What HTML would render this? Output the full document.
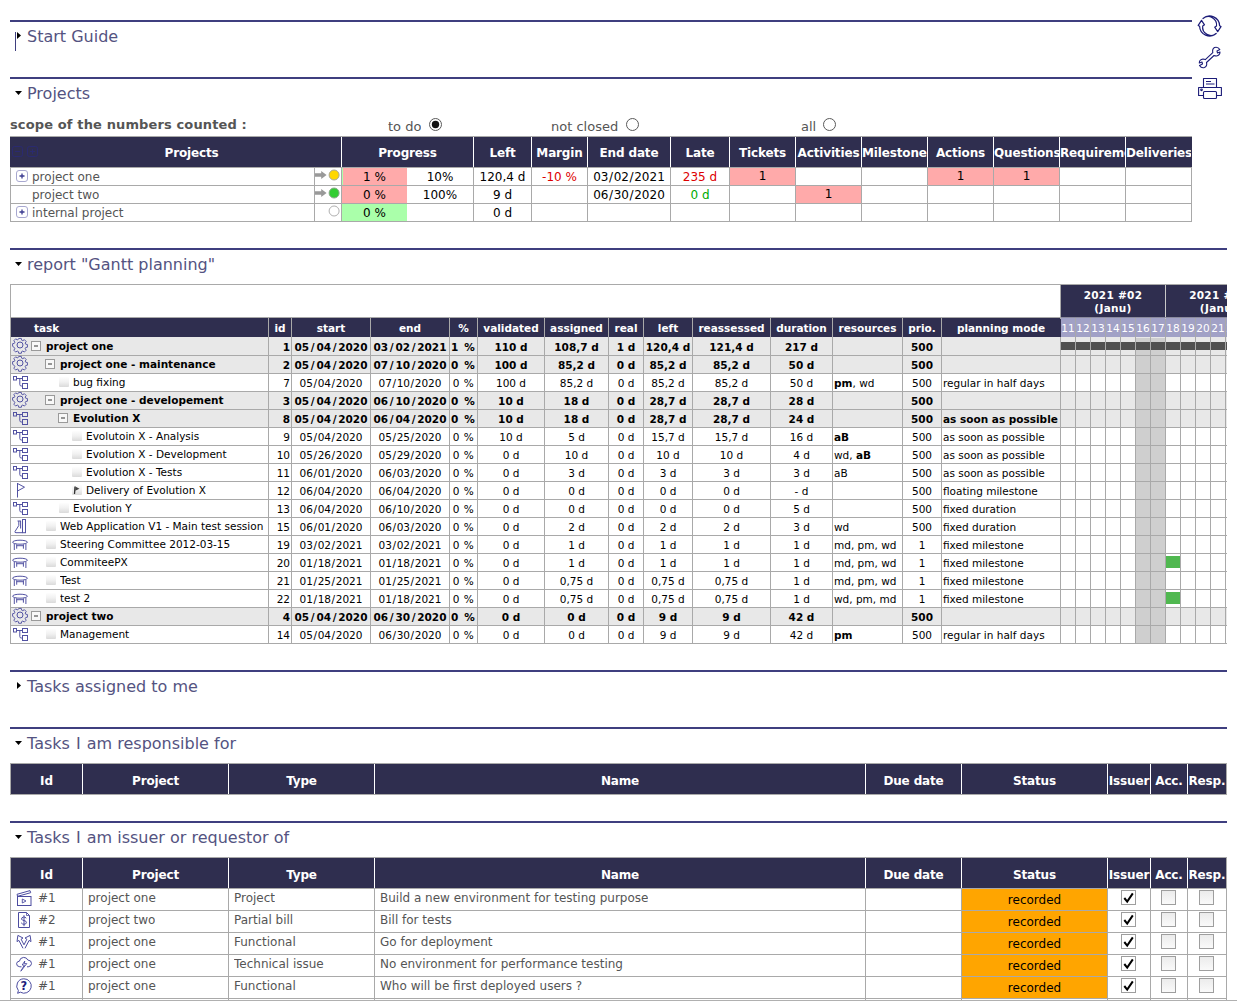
<!DOCTYPE html>
<html><head><meta charset="utf-8"><title>Today</title>
<style>
html,body{margin:0;padding:0;background:#fff}
body{width:1237px;height:1001px;overflow:hidden;position:relative;font-family:"DejaVu Sans",Verdana,"Liberation Sans",sans-serif;font-size:13px;color:#000}
.a{position:absolute;white-space:nowrap;overflow:hidden}
.v{position:absolute;overflow:visible}
.hr{position:absolute;height:2px;background:#3f3f7f}
.ttl{position:absolute;font-size:16px;line-height:20px;color:#545381;white-space:nowrap}
.hd{position:absolute;background:#2f2e4f;color:#fff;text-align:center;white-space:nowrap;overflow:hidden;font-size:13px}
.hl{position:absolute;height:1px;background:#a9a9a9}
.vl{position:absolute;width:1px;background:#a9a9a9}
.c{position:absolute;white-space:nowrap;overflow:hidden;text-align:center;font-size:12px}
.r{font-size:12px}
.ph{font-size:12px;font-weight:bold;letter-spacing:-.15px}
.g{font-size:10.5px}
.b{font-weight:bold}
.gr{color:#555}
.s{margin:0 .6px}
.b .s{margin:0 1.7px}
.pc{letter-spacing:.5px}
.b.pc{letter-spacing:1.2px}
svg{position:absolute;overflow:visible}
</style></head>
<body>
<div class="hr" style="left:10px;top:20px;width:1182px"></div>
<svg style="left:17px;top:32px" width="5" height="8" viewBox="0 0 5 8"><path d="M0 0V7L4 3.5Z" fill="#000"/></svg>
<div class="ttl" style="left:27px;top:27px">Start Guide</div>
<div class="vl" style="left:15px;top:32px;height:19px;background:#3f3f7f"></div>
<div class="hr" style="left:10px;top:77px;width:1182px"></div>
<svg style="left:15px;top:91px" width="8" height="5" viewBox="0 0 8 5"><path d="M0 0H7L3.5 4Z" fill="#000"/></svg>
<div class="ttl" style="left:27px;top:84px">Projects</div>
<div class="hr" style="left:10px;top:248px;width:1217px"></div>
<svg style="left:15px;top:262px" width="8" height="5" viewBox="0 0 8 5"><path d="M0 0H7L3.5 4Z" fill="#000"/></svg>
<div class="ttl" style="left:27px;top:255px">report &quot;Gantt planning&quot;</div>
<div class="hr" style="left:10px;top:670px;width:1217px"></div>
<svg style="left:17px;top:682px" width="5" height="8" viewBox="0 0 5 8"><path d="M0 0V7L4 3.5Z" fill="#000"/></svg>
<div class="ttl" style="left:27px;top:677px">Tasks assigned to me</div>
<div class="hr" style="left:10px;top:727px;width:1217px"></div>
<svg style="left:15px;top:741px" width="8" height="5" viewBox="0 0 8 5"><path d="M0 0H7L3.5 4Z" fill="#000"/></svg>
<div class="ttl" style="left:27px;top:734px">Tasks <span style="margin:0 1px">I</span> am responsible for</div>
<div class="hr" style="left:10px;top:821px;width:1217px"></div>
<svg style="left:15px;top:835px" width="8" height="5" viewBox="0 0 8 5"><path d="M0 0H7L3.5 4Z" fill="#000"/></svg>
<div class="ttl" style="left:27px;top:828px">Tasks <span style="margin:0 1px">I</span> am issuer or requestor of</div>
<svg style="left:1198px;top:15px" width="24" height="22" viewBox="0 0 24 22"><g fill="none" stroke="#1c1c78" stroke-width="1.2" stroke-linejoin="round" transform="translate(11.6,11)"><path id="rf" d="M-6.6 -7.5A10 10 0 0 1 10 -.3L11.4 .6L8.1 5.7L5.1 1.2L6.9 0A8.3 8.3 0 0 0 -6.6 -7.5Z"/><use href="#rf" transform="rotate(180)"/></g></svg>
<svg style="left:1198px;top:46px" width="23" height="23" viewBox="0 0 23 23"><g fill="none" stroke="#1c1c78" stroke-width="1.1" stroke-linejoin="round"><path d="M16.5 1.5Q20 .5 21.8 3.5L19 5L19.5 7L22 6Q22 9.5 18.5 10Q17 10 16 9.5L8.5 16.5Q9.5 20 6.5 21.5Q3.5 22.5 1.5 19.5L4.5 18L4 16L1.3 17Q1.3 13.5 5 13Q6.5 13 7.3 13.6L14.8 6.6Q14 3 16.5 1.5Z"/></g></svg>
<svg style="left:1198px;top:77px" width="24" height="23" viewBox="0 0 24 23"><g fill="none" stroke="#1c1c78" stroke-width="1.1" stroke-linejoin="round"><path d="M5.5 10V1.5H18.5V10"/><path d="M5.5 18.5H.6V10.5H23.4V18.5H18.5"/><rect x="5.5" y="14.5" width="13" height="7" rx="1"/><path d="M8 4.5H13M8 7H16.5" stroke-width="1"/><circle cx="3.5" cy="12.8" r=".8"/></g></svg>
<div class="a b gr" style="left:10px;top:116px;line-height:18px;font-size:13px;letter-spacing:.13px">scope of the numbers counted :</div>
<div class="a gr" style="left:388px;top:118px;line-height:18px">to do</div>
<svg style="left:429px;top:118px" width="13" height="13" viewBox="0 0 13 13"><circle cx="6.5" cy="6.5" r="6" fill="#fff" stroke="#5a5a5a" stroke-width="1"/><circle cx="6.5" cy="6.5" r="3.7" fill="#111"/></svg>
<div class="a gr" style="left:551px;top:118px;line-height:18px">not closed</div>
<svg style="left:626px;top:118px" width="13" height="13" viewBox="0 0 13 13"><circle cx="6.5" cy="6.5" r="6" fill="#fff" stroke="#5a5a5a" stroke-width="1"/></svg>
<div class="a gr" style="left:801px;top:118px;line-height:18px">all</div>
<svg style="left:823px;top:118px" width="13" height="13" viewBox="0 0 13 13"><circle cx="6.5" cy="6.5" r="6" fill="#fff" stroke="#5a5a5a" stroke-width="1"/></svg>
<div class="a" style="left:10px;top:137px;width:1182px;height:30px;background:#2f2e4f"></div>
<div class="hd ph" style="left:42px;top:137px;width:299px;height:30px;line-height:33px">Projects</div>
<div class="hd ph" style="left:342px;top:137px;width:131px;height:30px;line-height:33px">Progress</div>
<div class="hd ph" style="left:474px;top:137px;width:57px;height:30px;line-height:33px">Left</div>
<div class="hd ph" style="left:532px;top:137px;width:55px;height:30px;line-height:33px">Margin</div>
<div class="hd ph" style="left:588px;top:137px;width:82px;height:30px;line-height:33px">End date</div>
<div class="hd ph" style="left:671px;top:137px;width:58px;height:30px;line-height:33px">Late</div>
<div class="hd ph" style="left:730px;top:137px;width:65px;height:30px;line-height:33px">Tickets</div>
<div class="hd ph" style="left:796px;top:137px;width:65px;height:30px;line-height:33px">Activities</div>
<div class="hd ph" style="left:862px;top:137px;width:65px;height:30px;line-height:33px">Milestones</div>
<div class="hd ph" style="left:928px;top:137px;width:65px;height:30px;line-height:33px">Actions</div>
<div class="hd ph" style="left:994px;top:137px;width:65px;height:30px;line-height:33px">Questions</div>
<div class="hd ph" style="left:1060px;top:137px;width:65px;height:30px;line-height:33px">Requirements</div>
<div class="hd ph" style="left:1126px;top:137px;width:65px;height:30px;line-height:33px">Deliveries</div>
<div class="vl" style="left:341px;top:137px;height:30px;background:#fff"></div>
<div class="vl" style="left:473px;top:137px;height:30px;background:#fff"></div>
<div class="vl" style="left:531px;top:137px;height:30px;background:#fff"></div>
<div class="vl" style="left:587px;top:137px;height:30px;background:#fff"></div>
<div class="vl" style="left:670px;top:137px;height:30px;background:#fff"></div>
<div class="vl" style="left:729px;top:137px;height:30px;background:#fff"></div>
<div class="vl" style="left:795px;top:137px;height:30px;background:#fff"></div>
<div class="vl" style="left:861px;top:137px;height:30px;background:#fff"></div>
<div class="vl" style="left:927px;top:137px;height:30px;background:#fff"></div>
<div class="vl" style="left:993px;top:137px;height:30px;background:#fff"></div>
<div class="vl" style="left:1059px;top:137px;height:30px;background:#fff"></div>
<div class="vl" style="left:1125px;top:137px;height:30px;background:#fff"></div>
<div class="hl" style="left:10px;top:136px;width:1182px"></div>
<svg style="left:12px;top:146px" width="27" height="12" viewBox="0 0 27 12"><rect x=".5" y=".5" width="10" height="10" rx="2" fill="none" stroke="#2a2a70"/><path d="M3 5.5H8" stroke="#2a2a70"/><rect x="15.5" y=".5" width="10" height="10" rx="2" fill="none" stroke="#2a2a70"/><path d="M18 5.5H23M20.5 3V8" stroke="#2a2a70"/></svg>
<div class="hl" style="left:10px;top:167px;width:1182px"></div>
<div class="hl" style="left:10px;top:185px;width:1182px"></div>
<div class="hl" style="left:10px;top:203px;width:1182px"></div>
<div class="hl" style="left:10px;top:221px;width:1182px"></div>
<div class="vl" style="left:10px;top:167px;height:55px"></div>
<div class="vl" style="left:314px;top:167px;height:55px"></div>
<div class="vl" style="left:341px;top:167px;height:55px"></div>
<div class="vl" style="left:473px;top:167px;height:55px"></div>
<div class="vl" style="left:531px;top:167px;height:55px"></div>
<div class="vl" style="left:587px;top:167px;height:55px"></div>
<div class="vl" style="left:670px;top:167px;height:55px"></div>
<div class="vl" style="left:729px;top:167px;height:55px"></div>
<div class="vl" style="left:795px;top:167px;height:55px"></div>
<div class="vl" style="left:861px;top:167px;height:55px"></div>
<div class="vl" style="left:927px;top:167px;height:55px"></div>
<div class="vl" style="left:993px;top:167px;height:55px"></div>
<div class="vl" style="left:1059px;top:167px;height:55px"></div>
<div class="vl" style="left:1125px;top:167px;height:55px"></div>
<div class="vl" style="left:1191px;top:167px;height:55px"></div>
<div class="a gr r" style="left:32px;top:168px;height:17px;line-height:19px">project one</div>
<div class="a gr r" style="left:32px;top:186px;height:17px;line-height:19px">project two</div>
<div class="a gr r" style="left:32px;top:204px;height:17px;line-height:19px">internal project</div>
<svg style="left:16px;top:170px" width="12" height="12" viewBox="0 0 12 12"><rect x=".5" y=".5" width="11" height="11" rx="2.5" fill="#fff" stroke="#a8a8d0"/><path d="M3.5 6H8.5M6 3.5V8.5" stroke="#3a3a90" stroke-width="1.3"/></svg>
<svg style="left:16px;top:206px" width="12" height="12" viewBox="0 0 12 12"><rect x=".5" y=".5" width="11" height="11" rx="2.5" fill="#fff" stroke="#a8a8d0"/><path d="M3.5 6H8.5M6 3.5V8.5" stroke="#3a3a90" stroke-width="1.3"/></svg>
<svg style="left:315px;top:171px" width="12" height="8" viewBox="0 0 12 8"><path d="M0 2.2H6.2V0L11.6 4L6.2 8V5.8H0Z" fill="#999"/></svg>
<svg style="left:328px;top:169px" width="13" height="13" viewBox="0 0 13 13"><circle cx="6.1" cy="6" r="5" fill="#ffd700" stroke="#aaa89a" stroke-width="1"/></svg>
<svg style="left:315px;top:189px" width="12" height="8" viewBox="0 0 12 8"><path d="M0 2.2H6.2V0L11.6 4L6.2 8V5.8H0Z" fill="#999"/></svg>
<svg style="left:328px;top:187px" width="13" height="13" viewBox="0 0 13 13"><circle cx="6.1" cy="6" r="5" fill="#32cd32" stroke="#8aa88a" stroke-width="1"/></svg>
<svg style="left:328px;top:205px" width="13" height="13" viewBox="0 0 13 13"><circle cx="6.1" cy="6" r="5" fill="#fff" stroke="#b0b0b0" stroke-width="1"/></svg>
<div class="a" style="left:342px;top:168px;width:65px;height:17px;background:#ffaaaa"></div>
<div class="a" style="left:342px;top:168px;width:1px;height:17px;background:#aaffaa"></div>
<div class="a" style="left:342px;top:186px;width:65px;height:17px;background:#ffaaaa"></div>
<div class="a" style="left:342px;top:204px;width:65px;height:17px;background:#aaffaa"></div>
<div class="c" style="left:342px;top:168px;width:65px;height:17px;line-height:18px;">1 %</div>
<div class="c" style="left:407px;top:168px;width:66px;height:17px;line-height:18px;">10%</div>
<div class="c" style="left:342px;top:186px;width:65px;height:17px;line-height:18px;">0 %</div>
<div class="c" style="left:407px;top:186px;width:66px;height:17px;line-height:18px;">100%</div>
<div class="c" style="left:342px;top:204px;width:65px;height:17px;line-height:18px;">0 %</div>
<div class="c" style="left:474px;top:168px;width:57px;height:17px;line-height:18px;">120,4 d</div>
<div class="c" style="left:474px;top:186px;width:57px;height:17px;line-height:18px;">9 d</div>
<div class="c" style="left:474px;top:204px;width:57px;height:17px;line-height:18px;">0 d</div>
<div class="c" style="left:532px;top:168px;width:55px;height:17px;line-height:18px;color:#d00">-10 %</div>
<div class="c" style="left:588px;top:168px;width:82px;height:17px;line-height:18px;">03<span class="s">/</span>02<span class="s">/</span>2021</div>
<div class="c" style="left:588px;top:186px;width:82px;height:17px;line-height:18px;">06<span class="s">/</span>30<span class="s">/</span>2020</div>
<div class="c" style="left:671px;top:168px;width:58px;height:17px;line-height:18px;color:#d00">235 d</div>
<div class="c" style="left:671px;top:186px;width:58px;height:17px;line-height:18px;color:#0a0">0 d</div>
<div class="a" style="left:730px;top:168px;width:65px;height:17px;background:#ffaaaa"></div>
<div class="c" style="left:730px;top:168px;width:65px;height:17px;line-height:18px;line-height:16px">1</div>
<div class="a" style="left:796px;top:186px;width:65px;height:17px;background:#ffaaaa"></div>
<div class="c" style="left:796px;top:186px;width:65px;height:17px;line-height:18px;line-height:16px">1</div>
<div class="a" style="left:928px;top:168px;width:65px;height:17px;background:#ffaaaa"></div>
<div class="c" style="left:928px;top:168px;width:65px;height:17px;line-height:18px;line-height:16px">1</div>
<div class="a" style="left:994px;top:168px;width:65px;height:17px;background:#ffaaaa"></div>
<div class="c" style="left:994px;top:168px;width:65px;height:17px;line-height:18px;line-height:16px">1</div>
<div class="hl" style="left:10px;top:284px;width:1217px"></div>
<div class="vl" style="left:10px;top:284px;height:360px"></div>
<div class="a" style="left:11px;top:337px;width:1216px;height:18px;background:#e8e8e8"></div>
<div class="a" style="left:11px;top:355px;width:1216px;height:18px;background:#e8e8e8"></div>
<div class="a" style="left:11px;top:391px;width:1216px;height:18px;background:#e8e8e8"></div>
<div class="a" style="left:11px;top:409px;width:1216px;height:18px;background:#e8e8e8"></div>
<div class="a" style="left:11px;top:607px;width:1216px;height:18px;background:#e8e8e8"></div>
<div class="a" style="left:1136px;top:338px;width:29px;height:305px;background:#cfcfcf"></div>
<div class="a" style="left:11px;top:318px;width:1050px;height:19px;background:#2f2e4f"></div>
<div class="hl" style="left:10px;top:317px;width:1051px"></div>
<div class="hd g b" style="left:11px;top:318px;height:19px;line-height:20px;font-size:10.5px;text-align:left;padding-left:23px;width:234px;">task</div>
<div class="hd g b" style="left:269px;top:318px;height:19px;line-height:20px;font-size:10.5px;width:22px;">id</div>
<div class="hd g b" style="left:292px;top:318px;height:19px;line-height:20px;font-size:10.5px;width:78px;">start</div>
<div class="hd g b" style="left:371px;top:318px;height:19px;line-height:20px;font-size:10.5px;width:78px;">end</div>
<div class="hd g b" style="left:450px;top:318px;height:19px;line-height:20px;font-size:10.5px;width:27px;">%</div>
<div class="hd g b" style="left:478px;top:318px;height:19px;line-height:20px;font-size:10.5px;width:66px;">validated</div>
<div class="hd g b" style="left:545px;top:318px;height:19px;line-height:20px;font-size:10.5px;width:63px;">assigned</div>
<div class="hd g b" style="left:609px;top:318px;height:19px;line-height:20px;font-size:10.5px;width:34px;">real</div>
<div class="hd g b" style="left:644px;top:318px;height:19px;line-height:20px;font-size:10.5px;width:48px;">left</div>
<div class="hd g b" style="left:693px;top:318px;height:19px;line-height:20px;font-size:10.5px;width:77px;">reassessed</div>
<div class="hd g b" style="left:771px;top:318px;height:19px;line-height:20px;font-size:10.5px;width:61px;">duration</div>
<div class="hd g b" style="left:833px;top:318px;height:19px;line-height:20px;font-size:10.5px;width:69px;">resources</div>
<div class="hd g b" style="left:903px;top:318px;height:19px;line-height:20px;font-size:10.5px;width:38px;">prio.</div>
<div class="hd g b" style="left:942px;top:318px;height:19px;line-height:20px;font-size:10.5px;width:118px;">planning mode</div>
<div class="vl" style="left:268px;top:318px;height:19px"></div>
<div class="vl" style="left:291px;top:318px;height:19px"></div>
<div class="vl" style="left:370px;top:318px;height:19px"></div>
<div class="vl" style="left:449px;top:318px;height:19px"></div>
<div class="vl" style="left:477px;top:318px;height:19px"></div>
<div class="vl" style="left:544px;top:318px;height:19px"></div>
<div class="vl" style="left:608px;top:318px;height:19px"></div>
<div class="vl" style="left:643px;top:318px;height:19px"></div>
<div class="vl" style="left:692px;top:318px;height:19px"></div>
<div class="vl" style="left:770px;top:318px;height:19px"></div>
<div class="vl" style="left:832px;top:318px;height:19px"></div>
<div class="vl" style="left:902px;top:318px;height:19px"></div>
<div class="vl" style="left:941px;top:318px;height:19px"></div>
<div class="hd b" style="left:1061px;top:285px;width:104px;height:33px;line-height:13px;font-size:10.5px;letter-spacing:.3px;box-sizing:border-box;padding-top:4px">2021 #02<br>(Janu)</div>
<div class="hd b" style="left:1166px;top:285px;width:105px;height:33px;line-height:13px;font-size:10.5px;letter-spacing:.3px;box-sizing:border-box;padding-top:4px">2021 #03<br>(Janu)</div>
<div class="a" style="left:1061px;top:318px;width:170px;height:19px;background:#a1a1c6"></div>
<div class="c g" style="left:1061px;top:318px;width:14px;height:19px;line-height:20px;color:#fff;font-size:10.5px">11</div>
<div class="c g" style="left:1076px;top:318px;width:14px;height:19px;line-height:20px;color:#fff;font-size:10.5px">12</div>
<div class="c g" style="left:1091px;top:318px;width:14px;height:19px;line-height:20px;color:#fff;font-size:10.5px">13</div>
<div class="c g" style="left:1106px;top:318px;width:14px;height:19px;line-height:20px;color:#fff;font-size:10.5px">14</div>
<div class="c g" style="left:1121px;top:318px;width:14px;height:19px;line-height:20px;color:#fff;font-size:10.5px">15</div>
<div class="c g" style="left:1136px;top:318px;width:14px;height:19px;line-height:20px;color:#fff;font-size:10.5px">16</div>
<div class="c g" style="left:1151px;top:318px;width:14px;height:19px;line-height:20px;color:#fff;font-size:10.5px">17</div>
<div class="c g" style="left:1166px;top:318px;width:14px;height:19px;line-height:20px;color:#fff;font-size:10.5px">18</div>
<div class="c g" style="left:1181px;top:318px;width:14px;height:19px;line-height:20px;color:#fff;font-size:10.5px">19</div>
<div class="c g" style="left:1196px;top:318px;width:14px;height:19px;line-height:20px;color:#fff;font-size:10.5px">20</div>
<div class="c g" style="left:1211px;top:318px;width:14px;height:19px;line-height:20px;color:#fff;font-size:10.5px">21</div>
<div class="c g" style="left:1226px;top:318px;width:14px;height:19px;line-height:20px;color:#fff;font-size:10.5px">22</div>
<div class="hl" style="left:10px;top:355px;width:1217px"></div>
<div class="hl" style="left:10px;top:373px;width:1217px"></div>
<div class="hl" style="left:10px;top:391px;width:1217px"></div>
<div class="hl" style="left:10px;top:409px;width:1217px"></div>
<div class="hl" style="left:10px;top:427px;width:1217px"></div>
<div class="hl" style="left:10px;top:445px;width:1217px"></div>
<div class="hl" style="left:10px;top:463px;width:1217px"></div>
<div class="hl" style="left:10px;top:481px;width:1217px"></div>
<div class="hl" style="left:10px;top:499px;width:1217px"></div>
<div class="hl" style="left:10px;top:517px;width:1217px"></div>
<div class="hl" style="left:10px;top:535px;width:1217px"></div>
<div class="hl" style="left:10px;top:553px;width:1217px"></div>
<div class="hl" style="left:10px;top:571px;width:1217px"></div>
<div class="hl" style="left:10px;top:589px;width:1217px"></div>
<div class="hl" style="left:10px;top:607px;width:1217px"></div>
<div class="hl" style="left:10px;top:625px;width:1217px"></div>
<div class="hl" style="left:10px;top:643px;width:1217px"></div>
<div class="vl" style="left:268px;top:337px;height:307px"></div>
<div class="vl" style="left:291px;top:337px;height:307px"></div>
<div class="vl" style="left:370px;top:337px;height:307px"></div>
<div class="vl" style="left:449px;top:337px;height:307px"></div>
<div class="vl" style="left:477px;top:337px;height:307px"></div>
<div class="vl" style="left:544px;top:337px;height:307px"></div>
<div class="vl" style="left:608px;top:337px;height:307px"></div>
<div class="vl" style="left:643px;top:337px;height:307px"></div>
<div class="vl" style="left:692px;top:337px;height:307px"></div>
<div class="vl" style="left:770px;top:337px;height:307px"></div>
<div class="vl" style="left:832px;top:337px;height:307px"></div>
<div class="vl" style="left:902px;top:337px;height:307px"></div>
<div class="vl" style="left:941px;top:337px;height:307px"></div>
<div class="vl" style="left:1060px;top:337px;height:307px"></div>
<div class="vl" style="left:1075px;top:318px;height:326px"></div>
<div class="vl" style="left:1090px;top:318px;height:326px"></div>
<div class="vl" style="left:1105px;top:318px;height:326px"></div>
<div class="vl" style="left:1120px;top:318px;height:326px"></div>
<div class="vl" style="left:1135px;top:318px;height:326px"></div>
<div class="vl" style="left:1150px;top:318px;height:326px"></div>
<div class="vl" style="left:1165px;top:318px;height:326px"></div>
<div class="vl" style="left:1180px;top:318px;height:326px"></div>
<div class="vl" style="left:1195px;top:318px;height:326px"></div>
<div class="vl" style="left:1210px;top:318px;height:326px"></div>
<div class="vl" style="left:1225px;top:318px;height:326px"></div>
<div class="vl" style="left:1060px;top:285px;height:34px"></div>
<div class="vl" style="left:1165px;top:285px;height:34px;background:#c8c8c8"></div>
<div class="hl" style="left:1061px;top:317px;width:170px;background:#8a8a9e"></div>
<div class="a" style="left:1061px;top:342.4px;width:170px;height:7.2px;background:#505050"></div>
<div class="vl" style="left:1075px;top:342px;height:8px"></div>
<div class="vl" style="left:1090px;top:342px;height:8px"></div>
<div class="vl" style="left:1105px;top:342px;height:8px"></div>
<div class="vl" style="left:1120px;top:342px;height:8px"></div>
<div class="vl" style="left:1135px;top:342px;height:8px"></div>
<div class="vl" style="left:1150px;top:342px;height:8px"></div>
<div class="vl" style="left:1165px;top:342px;height:8px"></div>
<div class="vl" style="left:1180px;top:342px;height:8px"></div>
<div class="vl" style="left:1195px;top:342px;height:8px"></div>
<div class="vl" style="left:1210px;top:342px;height:8px"></div>
<div class="vl" style="left:1225px;top:342px;height:8px"></div>
<svg width="0" height="0" style="left:0;top:0"><defs><linearGradient id="lfg" x1="0" y1="0" x2="0" y2="1"><stop offset="0" stop-color="#fdfdfd"/><stop offset=".5" stop-color="#f1f1f1"/><stop offset="1" stop-color="#dadada"/></linearGradient></defs></svg>
<svg style="left:12px;top:337.0px" width="16" height="16" viewBox="0 0 16 16"><path d="M6.6 1h2.8l.4 1.9 1.2.5 1.6-1.1 2 2-1.1 1.6.5 1.2 1.9.4v2.8l-1.9.4-.5 1.2 1.1 1.6-2 2-1.6-1.1-1.2.5-.4 1.9H6.6l-.4-1.9-1.2-.5-1.6 1.1-2-2 1.1-1.6-.5-1.2L.1 9.4V6.6L2 6.2l.5-1.2-1.1-1.6 2-2L5 2.5l1.2-.5z" transform="translate(0.5,0.5) scale(0.94)" fill="none" stroke="#5252a2" stroke-width="1"/><circle cx="8" cy="8" r="3" fill="none" stroke="#5252a2" stroke-width="1"/></svg>
<svg style="left:31px;top:341px" width="10" height="10" viewBox="0 0 10 10"><rect x=".5" y=".5" width="9" height="9" fill="#f8f8f8" stroke="#9a9a9a"/><path d="M3 5H7" stroke="#6a6a6a" stroke-width="1.4"/></svg>
<div class="a g b" style="left:46px;top:338px;width:222px;height:17px;line-height:17px;font-size:10.5px">project one</div>
<div class="c g b" style="left:269px;top:338px;width:21px;height:17px;line-height:18px;font-size:10.5px;text-align:right;padding-right:1px;">1</div>
<div class="c g b" style="left:292px;top:338px;width:78px;height:17px;line-height:18px;font-size:10.5px;">05<span class="s">/</span>04<span class="s">/</span>2020</div>
<div class="c g b" style="left:371px;top:338px;width:78px;height:17px;line-height:18px;font-size:10.5px;">03<span class="s">/</span>02<span class="s">/</span>2021</div>
<div class="c g b pc" style="left:450px;top:338px;width:27px;height:17px;line-height:18px;font-size:10.5px;">1 %</div>
<div class="c g b" style="left:478px;top:338px;width:66px;height:17px;line-height:18px;font-size:10.5px;">110 d</div>
<div class="c g b" style="left:545px;top:338px;width:63px;height:17px;line-height:18px;font-size:10.5px;">108,7 d</div>
<div class="c g b" style="left:609px;top:338px;width:34px;height:17px;line-height:18px;font-size:10.5px;">1 d</div>
<div class="c g b" style="left:644px;top:338px;width:48px;height:17px;line-height:18px;font-size:10.5px;">120,4 d</div>
<div class="c g b" style="left:693px;top:338px;width:77px;height:17px;line-height:18px;font-size:10.5px;">121,4 d</div>
<div class="c g b" style="left:771px;top:338px;width:61px;height:17px;line-height:18px;font-size:10.5px;">217 d</div>
<div class="c g b" style="left:903px;top:338px;width:38px;height:17px;line-height:18px;font-size:10.5px;">500</div>
<svg style="left:12px;top:355.0px" width="16" height="16" viewBox="0 0 16 16"><path d="M6.6 1h2.8l.4 1.9 1.2.5 1.6-1.1 2 2-1.1 1.6.5 1.2 1.9.4v2.8l-1.9.4-.5 1.2 1.1 1.6-2 2-1.6-1.1-1.2.5-.4 1.9H6.6l-.4-1.9-1.2-.5-1.6 1.1-2-2 1.1-1.6-.5-1.2L.1 9.4V6.6L2 6.2l.5-1.2-1.1-1.6 2-2L5 2.5l1.2-.5z" transform="translate(0.5,0.5) scale(0.94)" fill="none" stroke="#5252a2" stroke-width="1"/><circle cx="8" cy="8" r="3" fill="none" stroke="#5252a2" stroke-width="1"/></svg>
<svg style="left:45px;top:359px" width="10" height="10" viewBox="0 0 10 10"><rect x=".5" y=".5" width="9" height="9" fill="#f8f8f8" stroke="#9a9a9a"/><path d="M3 5H7" stroke="#6a6a6a" stroke-width="1.4"/></svg>
<div class="a g b" style="left:60px;top:356px;width:208px;height:17px;line-height:17px;font-size:10.5px">project one - maintenance</div>
<div class="c g b" style="left:269px;top:356px;width:21px;height:17px;line-height:18px;font-size:10.5px;text-align:right;padding-right:1px;">2</div>
<div class="c g b" style="left:292px;top:356px;width:78px;height:17px;line-height:18px;font-size:10.5px;">05<span class="s">/</span>04<span class="s">/</span>2020</div>
<div class="c g b" style="left:371px;top:356px;width:78px;height:17px;line-height:18px;font-size:10.5px;">07<span class="s">/</span>10<span class="s">/</span>2020</div>
<div class="c g b pc" style="left:450px;top:356px;width:27px;height:17px;line-height:18px;font-size:10.5px;">0 %</div>
<div class="c g b" style="left:478px;top:356px;width:66px;height:17px;line-height:18px;font-size:10.5px;">100 d</div>
<div class="c g b" style="left:545px;top:356px;width:63px;height:17px;line-height:18px;font-size:10.5px;">85,2 d</div>
<div class="c g b" style="left:609px;top:356px;width:34px;height:17px;line-height:18px;font-size:10.5px;">0 d</div>
<div class="c g b" style="left:644px;top:356px;width:48px;height:17px;line-height:18px;font-size:10.5px;">85,2 d</div>
<div class="c g b" style="left:693px;top:356px;width:77px;height:17px;line-height:18px;font-size:10.5px;">85,2 d</div>
<div class="c g b" style="left:771px;top:356px;width:61px;height:17px;line-height:18px;font-size:10.5px;">50 d</div>
<div class="c g b" style="left:903px;top:356px;width:38px;height:17px;line-height:18px;font-size:10.5px;">500</div>
<svg style="left:12px;top:374.0px" width="16" height="16" viewBox="0 0 16 16"><g fill="none" stroke="#5252a2" stroke-width="1"><rect x="1.5" y="2.5" width="3" height="3.5"/><rect x="10.5" y="2.5" width="5" height="4"/><rect x="10.5" y="9.5" width="5" height="5"/><path d="M4.5 4.5H10.5M7.8 4.5V10.5Q7.8 12 9.3 12H10.5"/></g></svg>
<svg style="left:58.5px;top:376.5px" width="10" height="10" viewBox="0 0 10 10"><rect width="10" height="10" rx="1" fill="url(#lfg)"/></svg>
<div class="a g" style="left:73px;top:374px;width:195px;height:17px;line-height:17px;font-size:10.5px">bug fixing</div>
<div class="c g" style="left:269px;top:374px;width:21px;height:17px;line-height:18px;font-size:10.5px;text-align:right;padding-right:1px;">7</div>
<div class="c g" style="left:292px;top:374px;width:78px;height:17px;line-height:18px;font-size:10.5px;">05<span class="s">/</span>04<span class="s">/</span>2020</div>
<div class="c g" style="left:371px;top:374px;width:78px;height:17px;line-height:18px;font-size:10.5px;">07<span class="s">/</span>10<span class="s">/</span>2020</div>
<div class="c g pc" style="left:450px;top:374px;width:27px;height:17px;line-height:18px;font-size:10.5px;">0 %</div>
<div class="c g" style="left:478px;top:374px;width:66px;height:17px;line-height:18px;font-size:10.5px;">100 d</div>
<div class="c g" style="left:545px;top:374px;width:63px;height:17px;line-height:18px;font-size:10.5px;">85,2 d</div>
<div class="c g" style="left:609px;top:374px;width:34px;height:17px;line-height:18px;font-size:10.5px;">0 d</div>
<div class="c g" style="left:644px;top:374px;width:48px;height:17px;line-height:18px;font-size:10.5px;">85,2 d</div>
<div class="c g" style="left:693px;top:374px;width:77px;height:17px;line-height:18px;font-size:10.5px;">85,2 d</div>
<div class="c g" style="left:771px;top:374px;width:61px;height:17px;line-height:18px;font-size:10.5px;">50 d</div>
<div class="c g" style="left:833px;top:374px;width:68px;height:17px;line-height:18px;font-size:10.5px;text-align:left;padding-left:1px;"><b>pm</b>, wd</div>
<div class="c g" style="left:903px;top:374px;width:38px;height:17px;line-height:18px;font-size:10.5px;">500</div>
<div class="c g" style="left:942px;top:374px;width:117px;height:17px;line-height:18px;font-size:10.5px;text-align:left;padding-left:1px;">regular in half days</div>
<svg style="left:12px;top:391.0px" width="16" height="16" viewBox="0 0 16 16"><path d="M6.6 1h2.8l.4 1.9 1.2.5 1.6-1.1 2 2-1.1 1.6.5 1.2 1.9.4v2.8l-1.9.4-.5 1.2 1.1 1.6-2 2-1.6-1.1-1.2.5-.4 1.9H6.6l-.4-1.9-1.2-.5-1.6 1.1-2-2 1.1-1.6-.5-1.2L.1 9.4V6.6L2 6.2l.5-1.2-1.1-1.6 2-2L5 2.5l1.2-.5z" transform="translate(0.5,0.5) scale(0.94)" fill="none" stroke="#5252a2" stroke-width="1"/><circle cx="8" cy="8" r="3" fill="none" stroke="#5252a2" stroke-width="1"/></svg>
<svg style="left:45px;top:395px" width="10" height="10" viewBox="0 0 10 10"><rect x=".5" y=".5" width="9" height="9" fill="#f8f8f8" stroke="#9a9a9a"/><path d="M3 5H7" stroke="#6a6a6a" stroke-width="1.4"/></svg>
<div class="a g b" style="left:60px;top:392px;width:208px;height:17px;line-height:17px;font-size:10.5px">project one - developement</div>
<div class="c g b" style="left:269px;top:392px;width:21px;height:17px;line-height:18px;font-size:10.5px;text-align:right;padding-right:1px;">3</div>
<div class="c g b" style="left:292px;top:392px;width:78px;height:17px;line-height:18px;font-size:10.5px;">05<span class="s">/</span>04<span class="s">/</span>2020</div>
<div class="c g b" style="left:371px;top:392px;width:78px;height:17px;line-height:18px;font-size:10.5px;">06<span class="s">/</span>10<span class="s">/</span>2020</div>
<div class="c g b pc" style="left:450px;top:392px;width:27px;height:17px;line-height:18px;font-size:10.5px;">0 %</div>
<div class="c g b" style="left:478px;top:392px;width:66px;height:17px;line-height:18px;font-size:10.5px;">10 d</div>
<div class="c g b" style="left:545px;top:392px;width:63px;height:17px;line-height:18px;font-size:10.5px;">18 d</div>
<div class="c g b" style="left:609px;top:392px;width:34px;height:17px;line-height:18px;font-size:10.5px;">0 d</div>
<div class="c g b" style="left:644px;top:392px;width:48px;height:17px;line-height:18px;font-size:10.5px;">28,7 d</div>
<div class="c g b" style="left:693px;top:392px;width:77px;height:17px;line-height:18px;font-size:10.5px;">28,7 d</div>
<div class="c g b" style="left:771px;top:392px;width:61px;height:17px;line-height:18px;font-size:10.5px;">28 d</div>
<div class="c g b" style="left:903px;top:392px;width:38px;height:17px;line-height:18px;font-size:10.5px;">500</div>
<svg style="left:12px;top:410.0px" width="16" height="16" viewBox="0 0 16 16"><g fill="none" stroke="#5252a2" stroke-width="1"><rect x="1.5" y="2.5" width="3" height="3.5"/><rect x="10.5" y="2.5" width="5" height="4"/><rect x="10.5" y="9.5" width="5" height="5"/><path d="M4.5 4.5H10.5M7.8 4.5V10.5Q7.8 12 9.3 12H10.5"/></g></svg>
<svg style="left:58px;top:413px" width="10" height="10" viewBox="0 0 10 10"><rect x=".5" y=".5" width="9" height="9" fill="#f8f8f8" stroke="#9a9a9a"/><path d="M3 5H7" stroke="#6a6a6a" stroke-width="1.4"/></svg>
<div class="a g b" style="left:73px;top:410px;width:195px;height:17px;line-height:17px;font-size:10.5px">Evolution X</div>
<div class="c g b" style="left:269px;top:410px;width:21px;height:17px;line-height:18px;font-size:10.5px;text-align:right;padding-right:1px;">8</div>
<div class="c g b" style="left:292px;top:410px;width:78px;height:17px;line-height:18px;font-size:10.5px;">05<span class="s">/</span>04<span class="s">/</span>2020</div>
<div class="c g b" style="left:371px;top:410px;width:78px;height:17px;line-height:18px;font-size:10.5px;">06<span class="s">/</span>04<span class="s">/</span>2020</div>
<div class="c g b pc" style="left:450px;top:410px;width:27px;height:17px;line-height:18px;font-size:10.5px;">0 %</div>
<div class="c g b" style="left:478px;top:410px;width:66px;height:17px;line-height:18px;font-size:10.5px;">10 d</div>
<div class="c g b" style="left:545px;top:410px;width:63px;height:17px;line-height:18px;font-size:10.5px;">18 d</div>
<div class="c g b" style="left:609px;top:410px;width:34px;height:17px;line-height:18px;font-size:10.5px;">0 d</div>
<div class="c g b" style="left:644px;top:410px;width:48px;height:17px;line-height:18px;font-size:10.5px;">28,7 d</div>
<div class="c g b" style="left:693px;top:410px;width:77px;height:17px;line-height:18px;font-size:10.5px;">28,7 d</div>
<div class="c g b" style="left:771px;top:410px;width:61px;height:17px;line-height:18px;font-size:10.5px;">24 d</div>
<div class="c g b" style="left:903px;top:410px;width:38px;height:17px;line-height:18px;font-size:10.5px;">500</div>
<div class="c g b" style="left:942px;top:410px;width:117px;height:17px;line-height:18px;font-size:10.5px;text-align:left;padding-left:1px;">as soon as possible</div>
<svg style="left:12px;top:428.0px" width="16" height="16" viewBox="0 0 16 16"><g fill="none" stroke="#5252a2" stroke-width="1"><rect x="1.5" y="2.5" width="3" height="3.5"/><rect x="10.5" y="2.5" width="5" height="4"/><rect x="10.5" y="9.5" width="5" height="5"/><path d="M4.5 4.5H10.5M7.8 4.5V10.5Q7.8 12 9.3 12H10.5"/></g></svg>
<svg style="left:71.5px;top:430.5px" width="10" height="10" viewBox="0 0 10 10"><rect width="10" height="10" rx="1" fill="url(#lfg)"/></svg>
<div class="a g" style="left:86px;top:428px;width:182px;height:17px;line-height:17px;font-size:10.5px">Evolutoin X - Analysis</div>
<div class="c g" style="left:269px;top:428px;width:21px;height:17px;line-height:18px;font-size:10.5px;text-align:right;padding-right:1px;">9</div>
<div class="c g" style="left:292px;top:428px;width:78px;height:17px;line-height:18px;font-size:10.5px;">05<span class="s">/</span>04<span class="s">/</span>2020</div>
<div class="c g" style="left:371px;top:428px;width:78px;height:17px;line-height:18px;font-size:10.5px;">05<span class="s">/</span>25<span class="s">/</span>2020</div>
<div class="c g pc" style="left:450px;top:428px;width:27px;height:17px;line-height:18px;font-size:10.5px;">0 %</div>
<div class="c g" style="left:478px;top:428px;width:66px;height:17px;line-height:18px;font-size:10.5px;">10 d</div>
<div class="c g" style="left:545px;top:428px;width:63px;height:17px;line-height:18px;font-size:10.5px;">5 d</div>
<div class="c g" style="left:609px;top:428px;width:34px;height:17px;line-height:18px;font-size:10.5px;">0 d</div>
<div class="c g" style="left:644px;top:428px;width:48px;height:17px;line-height:18px;font-size:10.5px;">15,7 d</div>
<div class="c g" style="left:693px;top:428px;width:77px;height:17px;line-height:18px;font-size:10.5px;">15,7 d</div>
<div class="c g" style="left:771px;top:428px;width:61px;height:17px;line-height:18px;font-size:10.5px;">16 d</div>
<div class="c g" style="left:833px;top:428px;width:68px;height:17px;line-height:18px;font-size:10.5px;text-align:left;padding-left:1px;"><b>aB</b></div>
<div class="c g" style="left:903px;top:428px;width:38px;height:17px;line-height:18px;font-size:10.5px;">500</div>
<div class="c g" style="left:942px;top:428px;width:117px;height:17px;line-height:18px;font-size:10.5px;text-align:left;padding-left:1px;">as soon as possible</div>
<svg style="left:12px;top:446.0px" width="16" height="16" viewBox="0 0 16 16"><g fill="none" stroke="#5252a2" stroke-width="1"><rect x="1.5" y="2.5" width="3" height="3.5"/><rect x="10.5" y="2.5" width="5" height="4"/><rect x="10.5" y="9.5" width="5" height="5"/><path d="M4.5 4.5H10.5M7.8 4.5V10.5Q7.8 12 9.3 12H10.5"/></g></svg>
<svg style="left:71.5px;top:448.5px" width="10" height="10" viewBox="0 0 10 10"><rect width="10" height="10" rx="1" fill="url(#lfg)"/></svg>
<div class="a g" style="left:86px;top:446px;width:182px;height:17px;line-height:17px;font-size:10.5px">Evolution X - Development</div>
<div class="c g" style="left:269px;top:446px;width:21px;height:17px;line-height:18px;font-size:10.5px;text-align:right;padding-right:1px;">10</div>
<div class="c g" style="left:292px;top:446px;width:78px;height:17px;line-height:18px;font-size:10.5px;">05<span class="s">/</span>26<span class="s">/</span>2020</div>
<div class="c g" style="left:371px;top:446px;width:78px;height:17px;line-height:18px;font-size:10.5px;">05<span class="s">/</span>29<span class="s">/</span>2020</div>
<div class="c g pc" style="left:450px;top:446px;width:27px;height:17px;line-height:18px;font-size:10.5px;">0 %</div>
<div class="c g" style="left:478px;top:446px;width:66px;height:17px;line-height:18px;font-size:10.5px;">0 d</div>
<div class="c g" style="left:545px;top:446px;width:63px;height:17px;line-height:18px;font-size:10.5px;">10 d</div>
<div class="c g" style="left:609px;top:446px;width:34px;height:17px;line-height:18px;font-size:10.5px;">0 d</div>
<div class="c g" style="left:644px;top:446px;width:48px;height:17px;line-height:18px;font-size:10.5px;">10 d</div>
<div class="c g" style="left:693px;top:446px;width:77px;height:17px;line-height:18px;font-size:10.5px;">10 d</div>
<div class="c g" style="left:771px;top:446px;width:61px;height:17px;line-height:18px;font-size:10.5px;">4 d</div>
<div class="c g" style="left:833px;top:446px;width:68px;height:17px;line-height:18px;font-size:10.5px;text-align:left;padding-left:1px;">wd, <b>aB</b></div>
<div class="c g" style="left:903px;top:446px;width:38px;height:17px;line-height:18px;font-size:10.5px;">500</div>
<div class="c g" style="left:942px;top:446px;width:117px;height:17px;line-height:18px;font-size:10.5px;text-align:left;padding-left:1px;">as soon as possible</div>
<svg style="left:12px;top:464.0px" width="16" height="16" viewBox="0 0 16 16"><g fill="none" stroke="#5252a2" stroke-width="1"><rect x="1.5" y="2.5" width="3" height="3.5"/><rect x="10.5" y="2.5" width="5" height="4"/><rect x="10.5" y="9.5" width="5" height="5"/><path d="M4.5 4.5H10.5M7.8 4.5V10.5Q7.8 12 9.3 12H10.5"/></g></svg>
<svg style="left:71.5px;top:466.5px" width="10" height="10" viewBox="0 0 10 10"><rect width="10" height="10" rx="1" fill="url(#lfg)"/></svg>
<div class="a g" style="left:86px;top:464px;width:182px;height:17px;line-height:17px;font-size:10.5px">Evolution X - Tests</div>
<div class="c g" style="left:269px;top:464px;width:21px;height:17px;line-height:18px;font-size:10.5px;text-align:right;padding-right:1px;">11</div>
<div class="c g" style="left:292px;top:464px;width:78px;height:17px;line-height:18px;font-size:10.5px;">06<span class="s">/</span>01<span class="s">/</span>2020</div>
<div class="c g" style="left:371px;top:464px;width:78px;height:17px;line-height:18px;font-size:10.5px;">06<span class="s">/</span>03<span class="s">/</span>2020</div>
<div class="c g pc" style="left:450px;top:464px;width:27px;height:17px;line-height:18px;font-size:10.5px;">0 %</div>
<div class="c g" style="left:478px;top:464px;width:66px;height:17px;line-height:18px;font-size:10.5px;">0 d</div>
<div class="c g" style="left:545px;top:464px;width:63px;height:17px;line-height:18px;font-size:10.5px;">3 d</div>
<div class="c g" style="left:609px;top:464px;width:34px;height:17px;line-height:18px;font-size:10.5px;">0 d</div>
<div class="c g" style="left:644px;top:464px;width:48px;height:17px;line-height:18px;font-size:10.5px;">3 d</div>
<div class="c g" style="left:693px;top:464px;width:77px;height:17px;line-height:18px;font-size:10.5px;">3 d</div>
<div class="c g" style="left:771px;top:464px;width:61px;height:17px;line-height:18px;font-size:10.5px;">3 d</div>
<div class="c g" style="left:833px;top:464px;width:68px;height:17px;line-height:18px;font-size:10.5px;text-align:left;padding-left:1px;">aB</div>
<div class="c g" style="left:903px;top:464px;width:38px;height:17px;line-height:18px;font-size:10.5px;">500</div>
<div class="c g" style="left:942px;top:464px;width:117px;height:17px;line-height:18px;font-size:10.5px;text-align:left;padding-left:1px;">as soon as possible</div>
<svg style="left:12px;top:482.0px" width="16" height="16" viewBox="0 0 16 16"><path d="M5.5 1V15.5M5.5 1.5L12.5 5.2L5.5 9" fill="none" stroke="#5252a2" stroke-width="1"/></svg>
<svg style="left:71.5px;top:484.5px" width="10" height="10" viewBox="0 0 10 10"><rect width="10" height="10" rx="1" fill="url(#lfg)"/><path d="M3 1.5L2.5 9" stroke="#333" stroke-width="1.3"/><path d="M3.3 1.5L7.5 3.8L3.2 5.8Z" fill="#444"/></svg>
<div class="a g" style="left:86px;top:482px;width:182px;height:17px;line-height:17px;font-size:10.5px">Delivery of Evolution X</div>
<div class="c g" style="left:269px;top:482px;width:21px;height:17px;line-height:18px;font-size:10.5px;text-align:right;padding-right:1px;">12</div>
<div class="c g" style="left:292px;top:482px;width:78px;height:17px;line-height:18px;font-size:10.5px;">06<span class="s">/</span>04<span class="s">/</span>2020</div>
<div class="c g" style="left:371px;top:482px;width:78px;height:17px;line-height:18px;font-size:10.5px;">06<span class="s">/</span>04<span class="s">/</span>2020</div>
<div class="c g pc" style="left:450px;top:482px;width:27px;height:17px;line-height:18px;font-size:10.5px;">0 %</div>
<div class="c g" style="left:478px;top:482px;width:66px;height:17px;line-height:18px;font-size:10.5px;">0 d</div>
<div class="c g" style="left:545px;top:482px;width:63px;height:17px;line-height:18px;font-size:10.5px;">0 d</div>
<div class="c g" style="left:609px;top:482px;width:34px;height:17px;line-height:18px;font-size:10.5px;">0 d</div>
<div class="c g" style="left:644px;top:482px;width:48px;height:17px;line-height:18px;font-size:10.5px;">0 d</div>
<div class="c g" style="left:693px;top:482px;width:77px;height:17px;line-height:18px;font-size:10.5px;">0 d</div>
<div class="c g" style="left:771px;top:482px;width:61px;height:17px;line-height:18px;font-size:10.5px;">- d</div>
<div class="c g" style="left:903px;top:482px;width:38px;height:17px;line-height:18px;font-size:10.5px;">500</div>
<div class="c g" style="left:942px;top:482px;width:117px;height:17px;line-height:18px;font-size:10.5px;text-align:left;padding-left:1px;">floating milestone</div>
<svg style="left:12px;top:500.0px" width="16" height="16" viewBox="0 0 16 16"><g fill="none" stroke="#5252a2" stroke-width="1"><rect x="1.5" y="2.5" width="3" height="3.5"/><rect x="10.5" y="2.5" width="5" height="4"/><rect x="10.5" y="9.5" width="5" height="5"/><path d="M4.5 4.5H10.5M7.8 4.5V10.5Q7.8 12 9.3 12H10.5"/></g></svg>
<svg style="left:58.5px;top:502.5px" width="10" height="10" viewBox="0 0 10 10"><rect width="10" height="10" rx="1" fill="url(#lfg)"/></svg>
<div class="a g" style="left:73px;top:500px;width:195px;height:17px;line-height:17px;font-size:10.5px">Evolution Y</div>
<div class="c g" style="left:269px;top:500px;width:21px;height:17px;line-height:18px;font-size:10.5px;text-align:right;padding-right:1px;">13</div>
<div class="c g" style="left:292px;top:500px;width:78px;height:17px;line-height:18px;font-size:10.5px;">06<span class="s">/</span>04<span class="s">/</span>2020</div>
<div class="c g" style="left:371px;top:500px;width:78px;height:17px;line-height:18px;font-size:10.5px;">06<span class="s">/</span>10<span class="s">/</span>2020</div>
<div class="c g pc" style="left:450px;top:500px;width:27px;height:17px;line-height:18px;font-size:10.5px;">0 %</div>
<div class="c g" style="left:478px;top:500px;width:66px;height:17px;line-height:18px;font-size:10.5px;">0 d</div>
<div class="c g" style="left:545px;top:500px;width:63px;height:17px;line-height:18px;font-size:10.5px;">0 d</div>
<div class="c g" style="left:609px;top:500px;width:34px;height:17px;line-height:18px;font-size:10.5px;">0 d</div>
<div class="c g" style="left:644px;top:500px;width:48px;height:17px;line-height:18px;font-size:10.5px;">0 d</div>
<div class="c g" style="left:693px;top:500px;width:77px;height:17px;line-height:18px;font-size:10.5px;">0 d</div>
<div class="c g" style="left:771px;top:500px;width:61px;height:17px;line-height:18px;font-size:10.5px;">5 d</div>
<div class="c g" style="left:903px;top:500px;width:38px;height:17px;line-height:18px;font-size:10.5px;">500</div>
<div class="c g" style="left:942px;top:500px;width:117px;height:17px;line-height:18px;font-size:10.5px;text-align:left;padding-left:1px;">fixed duration</div>
<svg style="left:12px;top:518.0px" width="16" height="16" viewBox="0 0 16 16"><g fill="none" stroke="#5252a2" stroke-width="1"><path d="M5.5 3H9M6.8 3V7.5L3 13.5Q2.6 14.7 4 14.7H10.5"/><rect x="10.5" y="1.5" width="3" height="13.2"/><path d="M8.6 3V10.5"/></g></svg>
<svg style="left:45.5px;top:520.5px" width="10" height="10" viewBox="0 0 10 10"><rect width="10" height="10" rx="1" fill="url(#lfg)"/></svg>
<div class="a g" style="left:60px;top:518px;width:208px;height:17px;line-height:17px;font-size:10.5px">Web Application V1 - Main test session</div>
<div class="c g" style="left:269px;top:518px;width:21px;height:17px;line-height:18px;font-size:10.5px;text-align:right;padding-right:1px;">15</div>
<div class="c g" style="left:292px;top:518px;width:78px;height:17px;line-height:18px;font-size:10.5px;">06<span class="s">/</span>01<span class="s">/</span>2020</div>
<div class="c g" style="left:371px;top:518px;width:78px;height:17px;line-height:18px;font-size:10.5px;">06<span class="s">/</span>03<span class="s">/</span>2020</div>
<div class="c g pc" style="left:450px;top:518px;width:27px;height:17px;line-height:18px;font-size:10.5px;">0 %</div>
<div class="c g" style="left:478px;top:518px;width:66px;height:17px;line-height:18px;font-size:10.5px;">0 d</div>
<div class="c g" style="left:545px;top:518px;width:63px;height:17px;line-height:18px;font-size:10.5px;">2 d</div>
<div class="c g" style="left:609px;top:518px;width:34px;height:17px;line-height:18px;font-size:10.5px;">0 d</div>
<div class="c g" style="left:644px;top:518px;width:48px;height:17px;line-height:18px;font-size:10.5px;">2 d</div>
<div class="c g" style="left:693px;top:518px;width:77px;height:17px;line-height:18px;font-size:10.5px;">2 d</div>
<div class="c g" style="left:771px;top:518px;width:61px;height:17px;line-height:18px;font-size:10.5px;">3 d</div>
<div class="c g" style="left:833px;top:518px;width:68px;height:17px;line-height:18px;font-size:10.5px;text-align:left;padding-left:1px;">wd</div>
<div class="c g" style="left:903px;top:518px;width:38px;height:17px;line-height:18px;font-size:10.5px;">500</div>
<div class="c g" style="left:942px;top:518px;width:117px;height:17px;line-height:18px;font-size:10.5px;text-align:left;padding-left:1px;">fixed duration</div>
<svg style="left:12px;top:536.0px" width="16" height="16" viewBox="0 0 16 16"><g fill="none" stroke="#5252a2" stroke-width="1"><ellipse cx="8" cy="6.2" rx="7.4" ry="2"/><path d="M2.3 8V14M13.9 8V14M4.7 8.3V12.7M11.4 8.3V12.7M4.7 9.7H11.4"/></g></svg>
<svg style="left:45.5px;top:538.5px" width="10" height="10" viewBox="0 0 10 10"><rect width="10" height="10" rx="1" fill="url(#lfg)"/></svg>
<div class="a g" style="left:60px;top:536px;width:208px;height:17px;line-height:17px;font-size:10.5px">Steering Committee 2012-03-15</div>
<div class="c g" style="left:269px;top:536px;width:21px;height:17px;line-height:18px;font-size:10.5px;text-align:right;padding-right:1px;">19</div>
<div class="c g" style="left:292px;top:536px;width:78px;height:17px;line-height:18px;font-size:10.5px;">03<span class="s">/</span>02<span class="s">/</span>2021</div>
<div class="c g" style="left:371px;top:536px;width:78px;height:17px;line-height:18px;font-size:10.5px;">03<span class="s">/</span>02<span class="s">/</span>2021</div>
<div class="c g pc" style="left:450px;top:536px;width:27px;height:17px;line-height:18px;font-size:10.5px;">0 %</div>
<div class="c g" style="left:478px;top:536px;width:66px;height:17px;line-height:18px;font-size:10.5px;">0 d</div>
<div class="c g" style="left:545px;top:536px;width:63px;height:17px;line-height:18px;font-size:10.5px;">1 d</div>
<div class="c g" style="left:609px;top:536px;width:34px;height:17px;line-height:18px;font-size:10.5px;">0 d</div>
<div class="c g" style="left:644px;top:536px;width:48px;height:17px;line-height:18px;font-size:10.5px;">1 d</div>
<div class="c g" style="left:693px;top:536px;width:77px;height:17px;line-height:18px;font-size:10.5px;">1 d</div>
<div class="c g" style="left:771px;top:536px;width:61px;height:17px;line-height:18px;font-size:10.5px;">1 d</div>
<div class="c g" style="left:833px;top:536px;width:68px;height:17px;line-height:18px;font-size:10.5px;text-align:left;padding-left:1px;">md, pm, wd</div>
<div class="c g" style="left:903px;top:536px;width:38px;height:17px;line-height:18px;font-size:10.5px;">1</div>
<div class="c g" style="left:942px;top:536px;width:117px;height:17px;line-height:18px;font-size:10.5px;text-align:left;padding-left:1px;">fixed milestone</div>
<svg style="left:12px;top:554.0px" width="16" height="16" viewBox="0 0 16 16"><g fill="none" stroke="#5252a2" stroke-width="1"><ellipse cx="8" cy="6.2" rx="7.4" ry="2"/><path d="M2.3 8V14M13.9 8V14M4.7 8.3V12.7M11.4 8.3V12.7M4.7 9.7H11.4"/></g></svg>
<svg style="left:45.5px;top:556.5px" width="10" height="10" viewBox="0 0 10 10"><rect width="10" height="10" rx="1" fill="url(#lfg)"/></svg>
<div class="a g" style="left:60px;top:554px;width:208px;height:17px;line-height:17px;font-size:10.5px">CommiteePX</div>
<div class="c g" style="left:269px;top:554px;width:21px;height:17px;line-height:18px;font-size:10.5px;text-align:right;padding-right:1px;">20</div>
<div class="c g" style="left:292px;top:554px;width:78px;height:17px;line-height:18px;font-size:10.5px;">01<span class="s">/</span>18<span class="s">/</span>2021</div>
<div class="c g" style="left:371px;top:554px;width:78px;height:17px;line-height:18px;font-size:10.5px;">01<span class="s">/</span>18<span class="s">/</span>2021</div>
<div class="c g pc" style="left:450px;top:554px;width:27px;height:17px;line-height:18px;font-size:10.5px;">0 %</div>
<div class="c g" style="left:478px;top:554px;width:66px;height:17px;line-height:18px;font-size:10.5px;">0 d</div>
<div class="c g" style="left:545px;top:554px;width:63px;height:17px;line-height:18px;font-size:10.5px;">1 d</div>
<div class="c g" style="left:609px;top:554px;width:34px;height:17px;line-height:18px;font-size:10.5px;">0 d</div>
<div class="c g" style="left:644px;top:554px;width:48px;height:17px;line-height:18px;font-size:10.5px;">1 d</div>
<div class="c g" style="left:693px;top:554px;width:77px;height:17px;line-height:18px;font-size:10.5px;">1 d</div>
<div class="c g" style="left:771px;top:554px;width:61px;height:17px;line-height:18px;font-size:10.5px;">1 d</div>
<div class="c g" style="left:833px;top:554px;width:68px;height:17px;line-height:18px;font-size:10.5px;text-align:left;padding-left:1px;">md, pm, wd</div>
<div class="c g" style="left:903px;top:554px;width:38px;height:17px;line-height:18px;font-size:10.5px;">1</div>
<div class="c g" style="left:942px;top:554px;width:117px;height:17px;line-height:18px;font-size:10.5px;text-align:left;padding-left:1px;">fixed milestone</div>
<div class="a" style="left:1166px;top:556px;width:14px;height:12px;background:#50b850"></div>
<svg style="left:12px;top:572.0px" width="16" height="16" viewBox="0 0 16 16"><g fill="none" stroke="#5252a2" stroke-width="1"><ellipse cx="8" cy="6.2" rx="7.4" ry="2"/><path d="M2.3 8V14M13.9 8V14M4.7 8.3V12.7M11.4 8.3V12.7M4.7 9.7H11.4"/></g></svg>
<svg style="left:45.5px;top:574.5px" width="10" height="10" viewBox="0 0 10 10"><rect width="10" height="10" rx="1" fill="url(#lfg)"/></svg>
<div class="a g" style="left:60px;top:572px;width:208px;height:17px;line-height:17px;font-size:10.5px">Test</div>
<div class="c g" style="left:269px;top:572px;width:21px;height:17px;line-height:18px;font-size:10.5px;text-align:right;padding-right:1px;">21</div>
<div class="c g" style="left:292px;top:572px;width:78px;height:17px;line-height:18px;font-size:10.5px;">01<span class="s">/</span>25<span class="s">/</span>2021</div>
<div class="c g" style="left:371px;top:572px;width:78px;height:17px;line-height:18px;font-size:10.5px;">01<span class="s">/</span>25<span class="s">/</span>2021</div>
<div class="c g pc" style="left:450px;top:572px;width:27px;height:17px;line-height:18px;font-size:10.5px;">0 %</div>
<div class="c g" style="left:478px;top:572px;width:66px;height:17px;line-height:18px;font-size:10.5px;">0 d</div>
<div class="c g" style="left:545px;top:572px;width:63px;height:17px;line-height:18px;font-size:10.5px;">0,75 d</div>
<div class="c g" style="left:609px;top:572px;width:34px;height:17px;line-height:18px;font-size:10.5px;">0 d</div>
<div class="c g" style="left:644px;top:572px;width:48px;height:17px;line-height:18px;font-size:10.5px;">0,75 d</div>
<div class="c g" style="left:693px;top:572px;width:77px;height:17px;line-height:18px;font-size:10.5px;">0,75 d</div>
<div class="c g" style="left:771px;top:572px;width:61px;height:17px;line-height:18px;font-size:10.5px;">1 d</div>
<div class="c g" style="left:833px;top:572px;width:68px;height:17px;line-height:18px;font-size:10.5px;text-align:left;padding-left:1px;">md, pm, wd</div>
<div class="c g" style="left:903px;top:572px;width:38px;height:17px;line-height:18px;font-size:10.5px;">1</div>
<div class="c g" style="left:942px;top:572px;width:117px;height:17px;line-height:18px;font-size:10.5px;text-align:left;padding-left:1px;">fixed milestone</div>
<svg style="left:12px;top:590.0px" width="16" height="16" viewBox="0 0 16 16"><g fill="none" stroke="#5252a2" stroke-width="1"><ellipse cx="8" cy="6.2" rx="7.4" ry="2"/><path d="M2.3 8V14M13.9 8V14M4.7 8.3V12.7M11.4 8.3V12.7M4.7 9.7H11.4"/></g></svg>
<svg style="left:45.5px;top:592.5px" width="10" height="10" viewBox="0 0 10 10"><rect width="10" height="10" rx="1" fill="url(#lfg)"/></svg>
<div class="a g" style="left:60px;top:590px;width:208px;height:17px;line-height:17px;font-size:10.5px">test 2</div>
<div class="c g" style="left:269px;top:590px;width:21px;height:17px;line-height:18px;font-size:10.5px;text-align:right;padding-right:1px;">22</div>
<div class="c g" style="left:292px;top:590px;width:78px;height:17px;line-height:18px;font-size:10.5px;">01<span class="s">/</span>18<span class="s">/</span>2021</div>
<div class="c g" style="left:371px;top:590px;width:78px;height:17px;line-height:18px;font-size:10.5px;">01<span class="s">/</span>18<span class="s">/</span>2021</div>
<div class="c g pc" style="left:450px;top:590px;width:27px;height:17px;line-height:18px;font-size:10.5px;">0 %</div>
<div class="c g" style="left:478px;top:590px;width:66px;height:17px;line-height:18px;font-size:10.5px;">0 d</div>
<div class="c g" style="left:545px;top:590px;width:63px;height:17px;line-height:18px;font-size:10.5px;">0,75 d</div>
<div class="c g" style="left:609px;top:590px;width:34px;height:17px;line-height:18px;font-size:10.5px;">0 d</div>
<div class="c g" style="left:644px;top:590px;width:48px;height:17px;line-height:18px;font-size:10.5px;">0,75 d</div>
<div class="c g" style="left:693px;top:590px;width:77px;height:17px;line-height:18px;font-size:10.5px;">0,75 d</div>
<div class="c g" style="left:771px;top:590px;width:61px;height:17px;line-height:18px;font-size:10.5px;">1 d</div>
<div class="c g" style="left:833px;top:590px;width:68px;height:17px;line-height:18px;font-size:10.5px;text-align:left;padding-left:1px;">wd, pm, md</div>
<div class="c g" style="left:903px;top:590px;width:38px;height:17px;line-height:18px;font-size:10.5px;">1</div>
<div class="c g" style="left:942px;top:590px;width:117px;height:17px;line-height:18px;font-size:10.5px;text-align:left;padding-left:1px;">fixed milestone</div>
<div class="a" style="left:1166px;top:592px;width:14px;height:12px;background:#50b850"></div>
<svg style="left:12px;top:607.0px" width="16" height="16" viewBox="0 0 16 16"><path d="M6.6 1h2.8l.4 1.9 1.2.5 1.6-1.1 2 2-1.1 1.6.5 1.2 1.9.4v2.8l-1.9.4-.5 1.2 1.1 1.6-2 2-1.6-1.1-1.2.5-.4 1.9H6.6l-.4-1.9-1.2-.5-1.6 1.1-2-2 1.1-1.6-.5-1.2L.1 9.4V6.6L2 6.2l.5-1.2-1.1-1.6 2-2L5 2.5l1.2-.5z" transform="translate(0.5,0.5) scale(0.94)" fill="none" stroke="#5252a2" stroke-width="1"/><circle cx="8" cy="8" r="3" fill="none" stroke="#5252a2" stroke-width="1"/></svg>
<svg style="left:31px;top:611px" width="10" height="10" viewBox="0 0 10 10"><rect x=".5" y=".5" width="9" height="9" fill="#f8f8f8" stroke="#9a9a9a"/><path d="M3 5H7" stroke="#6a6a6a" stroke-width="1.4"/></svg>
<div class="a g b" style="left:46px;top:608px;width:222px;height:17px;line-height:17px;font-size:10.5px">project two</div>
<div class="c g b" style="left:269px;top:608px;width:21px;height:17px;line-height:18px;font-size:10.5px;text-align:right;padding-right:1px;">4</div>
<div class="c g b" style="left:292px;top:608px;width:78px;height:17px;line-height:18px;font-size:10.5px;">05<span class="s">/</span>04<span class="s">/</span>2020</div>
<div class="c g b" style="left:371px;top:608px;width:78px;height:17px;line-height:18px;font-size:10.5px;">06<span class="s">/</span>30<span class="s">/</span>2020</div>
<div class="c g b pc" style="left:450px;top:608px;width:27px;height:17px;line-height:18px;font-size:10.5px;">0 %</div>
<div class="c g b" style="left:478px;top:608px;width:66px;height:17px;line-height:18px;font-size:10.5px;">0 d</div>
<div class="c g b" style="left:545px;top:608px;width:63px;height:17px;line-height:18px;font-size:10.5px;">0 d</div>
<div class="c g b" style="left:609px;top:608px;width:34px;height:17px;line-height:18px;font-size:10.5px;">0 d</div>
<div class="c g b" style="left:644px;top:608px;width:48px;height:17px;line-height:18px;font-size:10.5px;">9 d</div>
<div class="c g b" style="left:693px;top:608px;width:77px;height:17px;line-height:18px;font-size:10.5px;">9 d</div>
<div class="c g b" style="left:771px;top:608px;width:61px;height:17px;line-height:18px;font-size:10.5px;">42 d</div>
<div class="c g b" style="left:903px;top:608px;width:38px;height:17px;line-height:18px;font-size:10.5px;">500</div>
<svg style="left:12px;top:626.0px" width="16" height="16" viewBox="0 0 16 16"><g fill="none" stroke="#5252a2" stroke-width="1"><rect x="1.5" y="2.5" width="3" height="3.5"/><rect x="10.5" y="2.5" width="5" height="4"/><rect x="10.5" y="9.5" width="5" height="5"/><path d="M4.5 4.5H10.5M7.8 4.5V10.5Q7.8 12 9.3 12H10.5"/></g></svg>
<svg style="left:45.5px;top:628.5px" width="10" height="10" viewBox="0 0 10 10"><rect width="10" height="10" rx="1" fill="url(#lfg)"/></svg>
<div class="a g" style="left:60px;top:626px;width:208px;height:17px;line-height:17px;font-size:10.5px">Management</div>
<div class="c g" style="left:269px;top:626px;width:21px;height:17px;line-height:18px;font-size:10.5px;text-align:right;padding-right:1px;">14</div>
<div class="c g" style="left:292px;top:626px;width:78px;height:17px;line-height:18px;font-size:10.5px;">05<span class="s">/</span>04<span class="s">/</span>2020</div>
<div class="c g" style="left:371px;top:626px;width:78px;height:17px;line-height:18px;font-size:10.5px;">06<span class="s">/</span>30<span class="s">/</span>2020</div>
<div class="c g pc" style="left:450px;top:626px;width:27px;height:17px;line-height:18px;font-size:10.5px;">0 %</div>
<div class="c g" style="left:478px;top:626px;width:66px;height:17px;line-height:18px;font-size:10.5px;">0 d</div>
<div class="c g" style="left:545px;top:626px;width:63px;height:17px;line-height:18px;font-size:10.5px;">0 d</div>
<div class="c g" style="left:609px;top:626px;width:34px;height:17px;line-height:18px;font-size:10.5px;">0 d</div>
<div class="c g" style="left:644px;top:626px;width:48px;height:17px;line-height:18px;font-size:10.5px;">9 d</div>
<div class="c g" style="left:693px;top:626px;width:77px;height:17px;line-height:18px;font-size:10.5px;">9 d</div>
<div class="c g" style="left:771px;top:626px;width:61px;height:17px;line-height:18px;font-size:10.5px;">42 d</div>
<div class="c g" style="left:833px;top:626px;width:68px;height:17px;line-height:18px;font-size:10.5px;text-align:left;padding-left:1px;"><b>pm</b></div>
<div class="c g" style="left:903px;top:626px;width:38px;height:17px;line-height:18px;font-size:10.5px;">500</div>
<div class="c g" style="left:942px;top:626px;width:117px;height:17px;line-height:18px;font-size:10.5px;text-align:left;padding-left:1px;">regular in half days</div>
<div class="a" style="left:1227px;top:280px;width:10px;height:370px;background:#fff"></div>
<div class="a" style="left:10px;top:763px;width:1217px;height:32px;background:#a9a9a9"></div>
<div class="a" style="left:11px;top:764px;width:1215px;height:30px;background:#2f2e4f"></div>
<div class="hd ph" style="left:11px;top:764px;width:71px;height:30px;line-height:34px">Id</div>
<div class="hd ph" style="left:83px;top:764px;width:145px;height:30px;line-height:34px">Project</div>
<div class="hd ph" style="left:229px;top:764px;width:145px;height:30px;line-height:34px">Type</div>
<div class="hd ph" style="left:375px;top:764px;width:490px;height:30px;line-height:34px">Name</div>
<div class="hd ph" style="left:866px;top:764px;width:95px;height:30px;line-height:34px">Due date</div>
<div class="hd ph" style="left:962px;top:764px;width:145px;height:30px;line-height:34px">Status</div>
<div class="hd ph" style="left:1108px;top:764px;width:42px;height:30px;line-height:34px">Issuer</div>
<div class="hd ph" style="left:1151px;top:764px;width:36px;height:30px;line-height:34px">Acc.</div>
<div class="hd ph" style="left:1188px;top:764px;width:38px;height:30px;line-height:34px">Resp.</div>
<div class="vl" style="left:82px;top:764px;height:30px;background:#fff"></div>
<div class="vl" style="left:228px;top:764px;height:30px;background:#fff"></div>
<div class="vl" style="left:374px;top:764px;height:30px;background:#fff"></div>
<div class="vl" style="left:865px;top:764px;height:30px;background:#fff"></div>
<div class="vl" style="left:961px;top:764px;height:30px;background:#fff"></div>
<div class="vl" style="left:1107px;top:764px;height:30px;background:#fff"></div>
<div class="vl" style="left:1150px;top:764px;height:30px;background:#fff"></div>
<div class="vl" style="left:1187px;top:764px;height:30px;background:#fff"></div>
<div class="a" style="left:10px;top:857px;width:1217px;height:32px;background:#a9a9a9"></div>
<div class="a" style="left:11px;top:858px;width:1215px;height:30px;background:#2f2e4f"></div>
<div class="hd ph" style="left:11px;top:858px;width:71px;height:30px;line-height:34px">Id</div>
<div class="hd ph" style="left:83px;top:858px;width:145px;height:30px;line-height:34px">Project</div>
<div class="hd ph" style="left:229px;top:858px;width:145px;height:30px;line-height:34px">Type</div>
<div class="hd ph" style="left:375px;top:858px;width:490px;height:30px;line-height:34px">Name</div>
<div class="hd ph" style="left:866px;top:858px;width:95px;height:30px;line-height:34px">Due date</div>
<div class="hd ph" style="left:962px;top:858px;width:145px;height:30px;line-height:34px">Status</div>
<div class="hd ph" style="left:1108px;top:858px;width:42px;height:30px;line-height:34px">Issuer</div>
<div class="hd ph" style="left:1151px;top:858px;width:36px;height:30px;line-height:34px">Acc.</div>
<div class="hd ph" style="left:1188px;top:858px;width:38px;height:30px;line-height:34px">Resp.</div>
<div class="vl" style="left:82px;top:858px;height:30px;background:#fff"></div>
<div class="vl" style="left:228px;top:858px;height:30px;background:#fff"></div>
<div class="vl" style="left:374px;top:858px;height:30px;background:#fff"></div>
<div class="vl" style="left:865px;top:858px;height:30px;background:#fff"></div>
<div class="vl" style="left:961px;top:858px;height:30px;background:#fff"></div>
<div class="vl" style="left:1107px;top:858px;height:30px;background:#fff"></div>
<div class="vl" style="left:1150px;top:858px;height:30px;background:#fff"></div>
<div class="vl" style="left:1187px;top:858px;height:30px;background:#fff"></div>
<svg width="0" height="0" style="left:0;top:0"><defs><linearGradient id="cbg" x1="0" y1="0" x2="0" y2="1"><stop offset="0" stop-color="#ebebeb"/><stop offset="1" stop-color="#fafafa"/></linearGradient></defs></svg>
<svg style="left:16px;top:890px" width="16" height="16" viewBox="0 0 16 16"><g fill="none" stroke="#4c4ca0" stroke-width="1"><rect x="1.5" y="6.5" width="13.5" height="9"/><path d="M1.6 6.3L1 4.3L14 .6L14.7 2.7Z"/><path d="M6.3 9V13L10 11Z" stroke-width=".9"/></g></svg>
<div class="a gr r" style="left:38px;top:889px;height:21px;line-height:19px">#1</div>
<div class="a gr r" style="left:88px;top:889px;height:21px;line-height:19px">project one</div>
<div class="a gr r" style="left:234px;top:889px;height:21px;line-height:19px">Project</div>
<div class="a gr r" style="left:380px;top:889px;height:21px;line-height:19px">Build a new environment for testing purpose</div>
<div class="c" style="left:962px;top:889px;width:145px;height:21px;line-height:23px;background:#ffa500">recorded</div>
<svg style="left:1121px;top:890px" width="15" height="15" viewBox="0 0 15 15"><rect x=".5" y=".5" width="14" height="14" fill="#fff" stroke="#9e9e9e"/><path d="M3.3 8L6.2 11.6L11.8 3.4" fill="none" stroke="#000" stroke-width="2"/></svg>
<svg style="left:1161px;top:890px" width="15" height="15" viewBox="0 0 15 15"><rect x=".5" y=".5" width="14" height="14" fill="url(#cbg)" stroke="#9e9e9e"/></svg>
<svg style="left:1199px;top:890px" width="15" height="15" viewBox="0 0 15 15"><rect x=".5" y=".5" width="14" height="14" fill="url(#cbg)" stroke="#9e9e9e"/></svg>
<svg style="left:16px;top:912px" width="16" height="16" viewBox="0 0 16 16"><g fill="none" stroke="#4c4ca0" stroke-width="1"><path d="M2.5 .5H10.5L13.5 3.5V15.5H2.5Z"/><path d="M10.5 .5V3.5H13.5" stroke-width=".8"/><path d="M10.3 6.2Q9 4.8 7.5 5Q5.3 5.4 5.6 7.2Q6 8.3 8 8.5Q10.6 8.9 10.4 10.8Q10 12.3 8 12.3Q6.3 12.3 5.2 10.8M8 3.2V14.2"/></g></svg>
<div class="a gr r" style="left:38px;top:911px;height:21px;line-height:19px">#2</div>
<div class="a gr r" style="left:88px;top:911px;height:21px;line-height:19px">project two</div>
<div class="a gr r" style="left:234px;top:911px;height:21px;line-height:19px">Partial bill</div>
<div class="a gr r" style="left:380px;top:911px;height:21px;line-height:19px">Bill for tests</div>
<div class="c" style="left:962px;top:911px;width:145px;height:21px;line-height:23px;background:#ffa500">recorded</div>
<svg style="left:1121px;top:912px" width="15" height="15" viewBox="0 0 15 15"><rect x=".5" y=".5" width="14" height="14" fill="#fff" stroke="#9e9e9e"/><path d="M3.3 8L6.2 11.6L11.8 3.4" fill="none" stroke="#000" stroke-width="2"/></svg>
<svg style="left:1161px;top:912px" width="15" height="15" viewBox="0 0 15 15"><rect x=".5" y=".5" width="14" height="14" fill="url(#cbg)" stroke="#9e9e9e"/></svg>
<svg style="left:1199px;top:912px" width="15" height="15" viewBox="0 0 15 15"><rect x=".5" y=".5" width="14" height="14" fill="url(#cbg)" stroke="#9e9e9e"/></svg>
<svg style="left:16px;top:934px" width="16" height="16" viewBox="0 0 16 16"><g fill="none" stroke="#4c4ca0" stroke-width="1" stroke-linejoin="round"><path d="M7 14.3L2.9 6.4L1 7.6L1.9 1.4L7 4L5.1 5.2L8 10.8"/><path d="M9 14.3L13.1 6.4L15 7.6L14.1 1.4L9 4L10.9 5.2L8 10.8"/></g></svg>
<div class="a gr r" style="left:38px;top:933px;height:21px;line-height:19px">#1</div>
<div class="a gr r" style="left:88px;top:933px;height:21px;line-height:19px">project one</div>
<div class="a gr r" style="left:234px;top:933px;height:21px;line-height:19px">Functional</div>
<div class="a gr r" style="left:380px;top:933px;height:21px;line-height:19px">Go for deployment</div>
<div class="c" style="left:962px;top:933px;width:145px;height:21px;line-height:23px;background:#ffa500">recorded</div>
<svg style="left:1121px;top:934px" width="15" height="15" viewBox="0 0 15 15"><rect x=".5" y=".5" width="14" height="14" fill="#fff" stroke="#9e9e9e"/><path d="M3.3 8L6.2 11.6L11.8 3.4" fill="none" stroke="#000" stroke-width="2"/></svg>
<svg style="left:1161px;top:934px" width="15" height="15" viewBox="0 0 15 15"><rect x=".5" y=".5" width="14" height="14" fill="url(#cbg)" stroke="#9e9e9e"/></svg>
<svg style="left:1199px;top:934px" width="15" height="15" viewBox="0 0 15 15"><rect x=".5" y=".5" width="14" height="14" fill="url(#cbg)" stroke="#9e9e9e"/></svg>
<svg style="left:16px;top:956px" width="16" height="16" viewBox="0 0 16 16"><g fill="none" stroke="#4c4ca0" stroke-width="1" stroke-linejoin="round"><path d="M5.5 10.8H3.8Q.4 10.4 .6 7.6Q1 5.2 3.4 5.2Q3.9 1.7 7.6 1.4Q10.8 1.4 11.8 4Q15.6 4.2 15.5 7.6Q15.2 10.4 12.2 10.8H11"/><path d="M8.8 5L6.2 9H8.4L4.8 15.2L10.8 7.6H8.3Z" stroke-width=".9"/></g></svg>
<div class="a gr r" style="left:38px;top:955px;height:21px;line-height:19px">#1</div>
<div class="a gr r" style="left:88px;top:955px;height:21px;line-height:19px">project one</div>
<div class="a gr r" style="left:234px;top:955px;height:21px;line-height:19px">Technical issue</div>
<div class="a gr r" style="left:380px;top:955px;height:21px;line-height:19px">No environment for performance testing</div>
<div class="c" style="left:962px;top:955px;width:145px;height:21px;line-height:23px;background:#ffa500">recorded</div>
<svg style="left:1121px;top:956px" width="15" height="15" viewBox="0 0 15 15"><rect x=".5" y=".5" width="14" height="14" fill="#fff" stroke="#9e9e9e"/><path d="M3.3 8L6.2 11.6L11.8 3.4" fill="none" stroke="#000" stroke-width="2"/></svg>
<svg style="left:1161px;top:956px" width="15" height="15" viewBox="0 0 15 15"><rect x=".5" y=".5" width="14" height="14" fill="url(#cbg)" stroke="#9e9e9e"/></svg>
<svg style="left:1199px;top:956px" width="15" height="15" viewBox="0 0 15 15"><rect x=".5" y=".5" width="14" height="14" fill="url(#cbg)" stroke="#9e9e9e"/></svg>
<svg style="left:16px;top:978px" width="16" height="16" viewBox="0 0 16 16"><g fill="none" stroke="#4c4ca0" stroke-width="1"><path d="M7.8 .8A7.2 7.2 0 1 1 4.4 14.2L1.6 15.3L2.4 12.6A7.2 7.2 0 0 1 7.8 .8Z"/></g><text x="7.9" y="12.2" font-size="11.5" font-weight="bold" text-anchor="middle" fill="#1c1c7c" font-family="DejaVu Sans,Liberation Sans,sans-serif">?</text></svg>
<div class="a gr r" style="left:38px;top:977px;height:21px;line-height:19px">#1</div>
<div class="a gr r" style="left:88px;top:977px;height:21px;line-height:19px">project one</div>
<div class="a gr r" style="left:234px;top:977px;height:21px;line-height:19px">Functional</div>
<div class="a gr r" style="left:380px;top:977px;height:21px;line-height:19px">Who will be first deployed users ?</div>
<div class="c" style="left:962px;top:977px;width:145px;height:21px;line-height:23px;background:#ffa500">recorded</div>
<svg style="left:1121px;top:978px" width="15" height="15" viewBox="0 0 15 15"><rect x=".5" y=".5" width="14" height="14" fill="#fff" stroke="#9e9e9e"/><path d="M3.3 8L6.2 11.6L11.8 3.4" fill="none" stroke="#000" stroke-width="2"/></svg>
<svg style="left:1161px;top:978px" width="15" height="15" viewBox="0 0 15 15"><rect x=".5" y=".5" width="14" height="14" fill="url(#cbg)" stroke="#9e9e9e"/></svg>
<svg style="left:1199px;top:978px" width="15" height="15" viewBox="0 0 15 15"><rect x=".5" y=".5" width="14" height="14" fill="url(#cbg)" stroke="#9e9e9e"/></svg>
<div class="hl" style="left:10px;top:910px;width:1217px"></div>
<div class="hl" style="left:10px;top:932px;width:1217px"></div>
<div class="hl" style="left:10px;top:954px;width:1217px"></div>
<div class="hl" style="left:10px;top:976px;width:1217px"></div>
<div class="hl" style="left:10px;top:998px;width:1217px"></div>
<div class="vl" style="left:10px;top:888px;height:113px"></div>
<div class="vl" style="left:82px;top:888px;height:113px"></div>
<div class="vl" style="left:228px;top:888px;height:113px"></div>
<div class="vl" style="left:374px;top:888px;height:113px"></div>
<div class="vl" style="left:865px;top:888px;height:113px"></div>
<div class="vl" style="left:961px;top:888px;height:113px"></div>
<div class="vl" style="left:1107px;top:888px;height:113px"></div>
<div class="vl" style="left:1150px;top:888px;height:113px"></div>
<div class="vl" style="left:1187px;top:888px;height:113px"></div>
<div class="vl" style="left:1226px;top:888px;height:113px"></div>
<div class="hl" style="left:0;top:1000px;width:1237px;background:#b0b0b0;height:1px"></div>
</body></html>
